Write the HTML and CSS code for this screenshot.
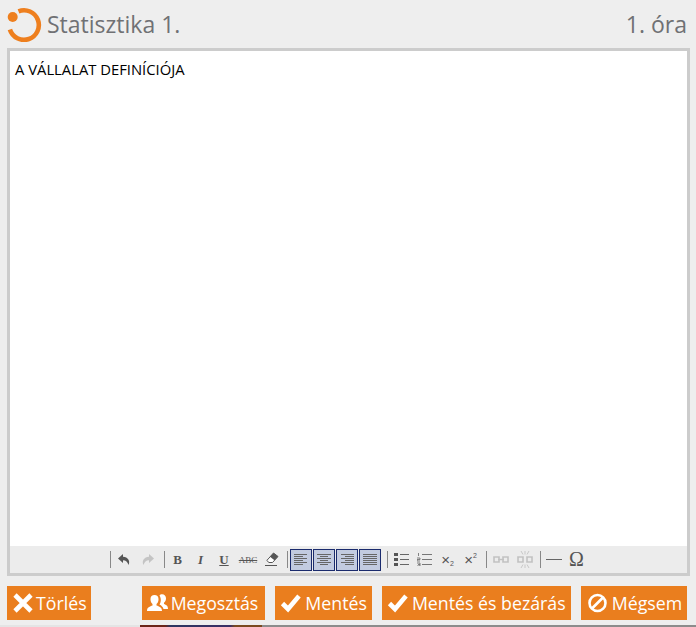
FILE: index.html
```html
<!DOCTYPE html>
<html lang="hu">
<head>
  <meta charset="UTF-8">
  <meta name="viewport" content="width=device-width, initial-scale=1">
  <title>Statisztika 1.</title>
  <link rel="stylesheet" href="styles.css">
</head>
<body>

  <div class="panel">
    <div class="header">
      <svg class="logo" width="36" height="36" viewBox="0 0 36 36">
        <circle cx="5.700" cy="11" r="5" fill="#ee7f1e"/>
        <path d="M11.500 5.300 A14.800 14.800 0 1 1 2.900 23.500" fill="none" stroke="#ee7f1e" stroke-width="4.600"/>
      </svg>
      <div class="title">Statisztika 1.</div>
      <div class="lesson">1. óra</div>
    </div>

    <div class="editor">
      <div class="content">A VÁLLALAT DEFINÍCIÓJA</div>
      <div class="toolbar">
        <span class="sep"></span>
        <span class="tool"><svg width="14" height="13" viewBox="0 0 14 13"><path d="M6 1 L1 5.500 L6 10 V7.300 C9 7.300 10.500 9 11.500 12 C13.500 8 11 4 6 3.800 Z" fill="#555"/></svg></span>
        <span class="tool w25"><svg width="14" height="13" viewBox="0 0 14 13"><path d="M8 1 L13 5.500 L8 10 V7.300 C5 7.300 3.500 9 2.500 12 C.5 8 3 4 8 3.800 Z" fill="#c4c4c4"/></svg></span>
        <span class="sep"></span>
        <span class="tool glyph bold">B</span>
        <span class="tool glyph slant">I</span>
        <span class="tool w24 glyph under">U</span>
        <span class="tool w24 glyph strike">ABC</span>
        <span class="tool"><svg width="16" height="15" viewBox="0 0 16 15"><path d="M9.500 1 L14 4.500 L8.500 10.500 H5 L2.800 8.500 Z" fill="#fff" stroke="#555"/><path d="M9.500 1 L14 4.500 L10.500 8.300 L6 4.800 Z" fill="#555"/><path d="M1 13.500 H13" stroke="#555"/></svg></span>
        <span class="sep sep-before-align"></span>
        <span class="align">
          <svg width="14" height="12" viewBox="0 0 14 12"><path d="M0 .5H13M0 2.500H9M0 4.500H13M0 6.500H9M0 8.500H13M0 10.500H9" stroke="#666"/></svg>
        </span>
        <span class="align">
          <svg width="14" height="12" viewBox="0 0 14 12"><path d="M0 .5H14M3 2.500H11M0 4.500H14M3 6.500H11M0 8.500H14M3 10.500H11" stroke="#666"/></svg>
        </span>
        <span class="align">
          <svg width="14" height="12" viewBox="0 0 14 12"><path d="M1 .5H14M5 2.500H14M1 4.500H14M5 6.500H14M1 8.500H14M5 10.500H14" stroke="#666"/></svg>
        </span>
        <span class="align">
          <svg width="14" height="12" viewBox="0 0 14 12"><path d="M0 .5H14M0 2.500H14M0 4.500H14M0 6.500H14M0 8.500H14M0 10.500H14" stroke="#666"/></svg>
        </span>
        <span class="sep sep-after-align"></span>
        <span class="tool w24"><svg width="15" height="13" viewBox="0 0 15 13"><path d="M0 0H4V3H0ZM0 5H4V8H0ZM0 10H4V13H0Z" fill="#555"/><path d="M6 1.500H15M6 6.500H15M6 11.500H15" stroke="#666"/></svg></span>
        <span class="tool"><svg width="15" height="13" viewBox="0 0 15 13"><path d="M1.500 0V3M0 5H3V6.500H0V8H3M0 10H3V13H0M1 11.500H3" fill="none" stroke="#666" stroke-width=".8"/><path d="M5 1.500H15M5 6.500H15M5 11.500H15" stroke="#777"/></svg></span>
        <span class="tool script">×<span class="sub">2</span></span>
        <span class="tool script">×<span class="sup">2</span></span>
        <span class="sep"></span>
        <span class="tool w25"><svg width="16" height="7" viewBox="0 0 16 7"><path d="M1 1H6V6H1ZM10 1H15V6H10Z" fill="none" stroke="#c2c2c2" stroke-width="1.600"/><path d="M5 3.500H11" stroke="#c2c2c2" stroke-width="1.400"/></svg></span>
        <span class="tool"><svg width="16" height="18" viewBox="0 0 16 18"><path d="M1 6H6V11H1ZM10 6H15V11H10Z" fill="none" stroke="#c2c2c2" stroke-width="1.600"/><path d="M4 0L6 3.500M8 0V3.500M12 0L10 3.500M4 17L6 13.500M8 17V13.500M12 17L10 13.500" stroke="#c8c8c8"/></svg></span>
        <span class="sep"></span>
        <span class="tool rule"><span class="rule-line"></span></span>
        <span class="tool glyph omega">Ω</span>
      </div>
    </div>

    <div class="actions">
      <button class="btn delete" type="button">
        <svg width="22" height="22" viewBox="0 0 22 22"><path d="M3 3L19 19M19 3L3 19" stroke="#fff" stroke-width="4.600"/></svg>
        Törlés
      </button>
      <button class="btn share" type="button">
        <svg width="22" height="18" viewBox="0 0 22 18"><path d="M0 17C0 13 3 12.500 5.500 11.500V10C3.500 8.500 3.500 6 3.500 5C3.500 2.500 5 1 7.500 1S11.500 2.500 11.500 5C11.500 6 11.500 8.500 9.500 10V11.500C12 12.500 15 13 15 17Z" fill="#fff"/><path d="M12.500 1.500C13 .8 14 .3 15 .3C17.500 .3 19 2 19 4.300C19 6 18.500 7.500 17 8.800V10C19 10.800 21 11.500 21 15H16.500C16 13 14.500 11.500 12.500 10.500C14 8.500 14.500 4.500 12.500 1.500Z" fill="#fff"/></svg>
        Megosztás
      </button>
      <button class="btn" type="button">
        <svg width="22" height="20" viewBox="0 0 22 20"><path d="M2.500 10.500L8 16L19 3" fill="none" stroke="#fff" stroke-width="4.600"/></svg>
        Mentés
      </button>
      <button class="btn" type="button">
        <svg width="22" height="20" viewBox="0 0 22 20"><path d="M2.500 10.500L8 16L19 3" fill="none" stroke="#fff" stroke-width="4.600"/></svg>
        Mentés és bezárás
      </button>
      <button class="btn" type="button">
        <svg width="23" height="20" viewBox="0 0 21 20"><circle cx="10.500" cy="10" r="8" fill="none" stroke="#fff" stroke-width="2.600"/><path d="M5 15.500L16 4.500" stroke="#fff" stroke-width="2.600"/></svg>
        Mégsem
      </button>
    </div>
  </div>

  <div class="backdrop"></div>

</body>
</html>
```

FILE: styles.css
```css
html, body {
  height: 100%;
}
body {
  margin: 0;
  display: flex;
  flex-direction: column;
  background-color: #eee;
  font-family: 'Open Sans', sans-serif;
  overflow: hidden;
}
.panel {
  flex: 1;
  display: flex;
  flex-direction: column;
  padding: 0 7px 5px 7px;
  min-height: 0;
}
.header {
  height: 48px;
  display: flex;
  align-items: center;
  flex-shrink: 0;
  color: #707174;
  font-size: 23px;
}
.logo {
  margin-right: 4px;
}
.title {
  flex: 1;
}
.lesson {
  margin-right: 2px;
}
.editor {
  flex: 1;
  display: flex;
  flex-direction: column;
  margin-right: -1px;
  border: 3px solid #ccc;
  background: #fff;
  min-height: 0;
}
.content {
  flex: 1;
  padding: 8px 5px;
  color: #000;
  font-size: 14.8px;
  line-height: 20px;
}
.toolbar {
  height: 27px;
  display: flex;
  align-items: center;
  padding-left: 96px;
  background-color: #ececec;
  color: #555;
}
.sep {
  width: 1px;
  height: 17px;
  margin: 0 1px 0 4px;
  background-color: #888;
}
.sep-before-align {
  margin-right: 2px;
}
.sep-after-align {
  margin-left: 5px;
}
.tool {
  width: 23px;
  height: 22px;
  display: flex;
  align-items: center;
  justify-content: center;
}
.w24 {
  width: 24px;
}
.w25 {
  width: 25px;
}
.glyph {
  font-family: 'Liberation Serif', serif;
  font-size: 13px;
}
.bold {
  font-weight: bold;
}
.slant {
  font-weight: bold;
  font-style: italic;
}
.under {
  font-weight: bold;
  text-decoration: underline;
}
.strike {
  font-size: 9px;
  text-decoration: line-through;
}
.omega {
  font-size: 20px;
}
.script {
  font-family: 'Liberation Sans', sans-serif;
  font-size: 15px;
}
.sub, .sup {
  font-size: 7px;
}
.sub {
  align-self: flex-end;
  margin-bottom: 4px;
}
.sup {
  align-self: flex-start;
  margin-top: 3px;
}
.rule-line {
  width: 16px;
  height: 1px;
  background-color: #666;
}
.align {
  width: 22px;
  height: 22px;
  box-sizing: border-box;
  margin-right: 1px;
  display: flex;
  align-items: center;
  justify-content: center;
  background-color: #c2cbe0;
  border: 1px solid #1a2b6d;
}
.actions {
  display: flex;
  flex-shrink: 0;
  gap: 10px;
  margin-top: 10px;
}
.btn {
  height: 34px;
  display: flex;
  align-items: center;
  gap: 3px;
  padding: 0 5px;
  border: none;
  background-color: #ea7e1e;
  color: #fff;
  font-family: 'Open Sans', sans-serif;
  font-size: 17.75px;
  font-weight: 400;
  white-space: nowrap;
}
.delete {
  gap: 2px;
  padding-right: 4px;
  margin-right: 41px;
}
.share {
  gap: 2px;
  padding-right: 7px;
}
.backdrop {
  height: 2px;
  flex-shrink: 0;
  background: linear-gradient(90deg, #e4e4e4 0, #e4e4e4 140px, #6b2418 140px, #6b2418 165px, #2b3560 170px, #3a2f66 230px, #7a4a20 235px, #7a4a20 262px, #8c8c8c 262px, #8c8c8c 100%);
}
```
